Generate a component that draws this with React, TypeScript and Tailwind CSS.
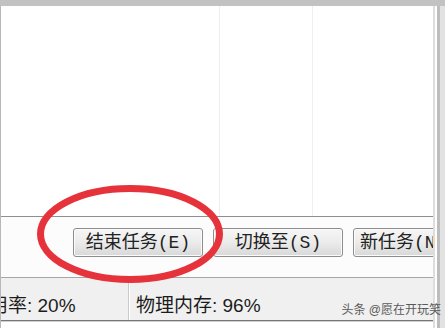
// Task manager footer (Win7 style) with a red ellipse marking the
// "结束任务" button. Fixed 445x328 crop of the window.
const cjk = "font-['Liberation_Sans','Noto_Sans_CJK_SC',sans-serif]"
const btnFont = "font-['Liberation_Mono','Noto_Sans_CJK_SC',monospace]"

function Button({ label, className = '' }: { label: string; className?: string }) {
  return (
    <div
      className={`h-[29px] shrink-0 flex items-center rounded-[3px] border border-[#8d8d8d] bg-linear-to-b from-[#f6f6f6] via-[#ebebeb] to-[#d8d8d8] shadow-[inset_0_0_0_1px_#fbfbfb] text-[18px] leading-none text-[#222] ${btnFont} ${className}`}
    >
      {label}
    </div>
  )
}

export default function App() {
  return (
    <div className="relative w-[445px] h-[328px] bg-white flex flex-col overflow-hidden">
      <div className="h-[6px] shrink-0 bg-[#c2c2c2]" />
      <div className="flex flex-1 min-h-0">
        {/* window client area */}
        <div className="w-[433px] flex flex-col border-l border-[#b8b8b8]">
          {/* empty process list, faint column lines */}
          <div className="h-[210px] shrink-0 flex">
            <div className="w-[219px] border-r border-[#eeeeee]" />
            <div className="w-[93px] border-r border-[#eeeeee]" />
            <div className="flex-1" />
          </div>
          <div className="h-px bg-[#8e8e8e]" />
          {/* buttons */}
          <div className="h-[60px] shrink-0 flex items-start pt-[11px] pl-[72px] gap-[10px] bg-[#fcfcfc] overflow-hidden">
            <Button label="结束任务(E)" className="w-[130px] justify-center" />
            <Button label="切换至(S)" className="w-[130px] justify-center" />
            <Button label="新任务(N)..." className="w-[130px] pl-[6px]" />
          </div>
          <div className="h-px bg-[#a6a6a6]" />
          {/* status bar */}
          <div className={`h-[42px] shrink-0 flex bg-[#f0f0f0] text-[19px] leading-none text-[#1c1c1c] ${cjk}`}>
            <div className="w-[128px] flex items-end pb-[5px] overflow-hidden border-r border-[#cacaca]">
              <span className="ml-[-12px] whitespace-nowrap">用率: 20%</span>
            </div>
            <div className="flex-1 flex items-end pb-[5px] pl-[6px] border-l border-white">
              <span className="whitespace-nowrap">物理内存: 96%</span>
            </div>
          </div>
          <div className="h-px bg-[#777777]" />
          <div className="h-px bg-[#cfcfcf]" />
          <div className="flex-1 bg-white" />
        </div>
        {/* right window frame */}
        <div className="w-[2px] bg-[#dddddd]" />
        <div className="w-[2px] bg-white" />
        <div className="w-[3px] bg-[#bdbdbd]" />
        <div className="flex-1 bg-[#e2e2e2]" />
      </div>

      {/* red highlight ellipse */}
      <svg className="absolute left-0 top-0 pointer-events-none" width="445" height="328" viewBox="0 0 445 328">
        <ellipse cx="130" cy="234" rx="89.5" ry="45.5" fill="none" stroke="#e6323a" strokeWidth="7" />
      </svg>

      {/* watermark */}
      <div className={`absolute right-[4px] top-[304px] text-[12px] leading-none text-[#5a5a5a] whitespace-nowrap ${cjk}`}>
        头条 @愿在开玩笑
      </div>
    </div>
  )
}
